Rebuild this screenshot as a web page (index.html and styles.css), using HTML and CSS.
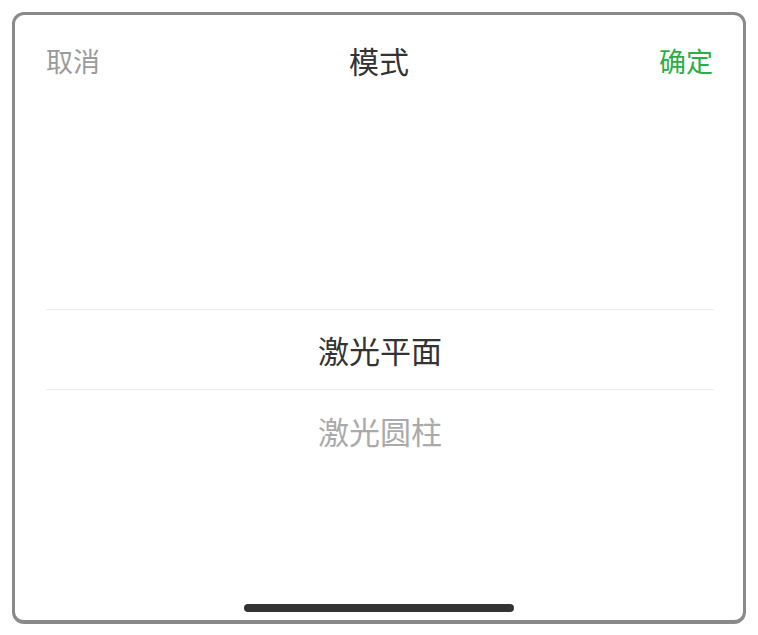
FILE: index.html
```html
<!DOCTYPE html>
<html>
	<head>
		<meta name="viewport" content="width=device-width, initial-scale=1" />
		<link rel="stylesheet" href="styles.css">
	</head>

	<body>
		<div class="sheet">
			<div class="header">
				<span class="cancel">取消</span>
				<span class="title">模式</span>
				<span class="confirm">确定</span>
			</div>
			<div class="picker">
				<div class="row selected">激光平面</div>
				<div class="row">激光圆柱</div>
			</div>
			<div class="home-bar"></div>
		</div>
	</body>
</html>
```

FILE: styles.css
```css
html, body {
    margin: 0;
    padding: 0;
    background-color: #fff;
}

body {
    font-family: "Noto Sans CJK SC", "Noto Sans", sans-serif;
    padding: 12px 12px 0 12px;
}

.sheet {
    width: 734px;
    height: 612px;
    box-sizing: border-box;
    border: 3px solid #8a8a8a;
    border-bottom-width: 4px;
    border-radius: 12px;
    display: flex;
    flex-direction: column;
    background-color: #fff;
}

.header {
    height: 90px;
    padding: 0 30px 0 31px;
    display: flex;
    align-items: center;
    justify-content: space-between;
    position: relative;
}

.cancel {
    font-size: 27px;
    color: #9b9b9b;
}

.title {
    position: absolute;
    left: 0;
    right: 0;
    text-align: center;
    font-size: 30px;
    color: #333;
}

.confirm {
    font-size: 27px;
    color: #2aae48;
    position: relative;
}

.picker {
    padding: 204px 29px 0 31px;
}

.row {
    height: 81px;
    display: flex;
    align-items: center;
    justify-content: center;
    font-size: 31px;
    color: #aaa;
    box-sizing: border-box;
}

.row.selected {
    color: #333;
    border-top: 1px solid #eee;
    border-bottom: 1px solid #eee;
}

.home-bar {
    width: 270px;
    height: 8px;
    border-radius: 4px;
    background-color: #333;
    margin: auto auto 8px auto;
}
```
